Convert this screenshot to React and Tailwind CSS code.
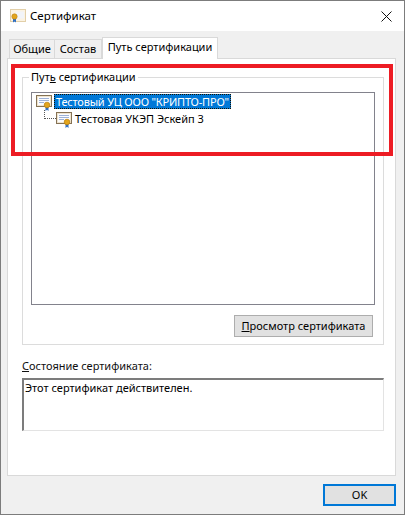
const FONT = "font-['Noto_Sans','Open_Sans',sans-serif]";

const CertIcon = ({ className }) => (
    <svg className={className} viewBox="0 0 17 16" width="17" height="16">
        <rect x="0.5" y="0.5" width="15" height="11" fill="#efe4cf" stroke="#857255" />
        <rect x="2" y="2" width="12" height="8" fill="#fbfcfe" />
        <path d="M3 3.5h10M3 5.5h10M3 7.5h5" stroke="#9db1d6" strokeWidth="1" />
        <path d="M9.5 11v5l1.5-1.2 1.5 1.2v-5z" fill="#2f6fc4" />
        <circle cx="11" cy="10" r="2.8" fill="#e3a51c" stroke="#b87c10" strokeWidth="0.7" />
    </svg>
);

const App = () => {
    return (
        <div className={`${FONT} relative flex h-[515px] w-[405px] flex-col border border-[#7c7c7c] bg-[#f0f0f0] text-[11px] text-black`}>
            {/* title bar */}
            <div className="flex h-[30px] items-center bg-white pl-[9px] pr-[12px]">
                <svg viewBox="0 0 16 14" width="16" height="14" className="mr-[4px]">
                    <rect x="0.5" y="0.5" width="15" height="12" fill="#fbf3e3" stroke="#e2cfa8" />
                    <rect x="6" y="2.5" width="8" height="7" fill="#f2f4f8" />
                    <path d="M3 9.5v4l1.5-1 1.5 1v-4z" fill="#2f6fc4" />
                    <circle cx="4.5" cy="7.5" r="2.7" fill="#e3a51c" stroke="#b57a10" strokeWidth="0.5" />
                </svg>
                <span className="text-[11.5px]">Сертификат</span>
                <svg viewBox="0 0 11 11" width="11" height="11" className="ml-auto">
                    <path d="M0.5 0.5l10 10M10.5 0.5l-10 10" stroke="#111" strokeWidth="1" fill="none" />
                </svg>
            </div>

            {/* tabs */}
            <div className="mt-[6px] flex h-[21px] items-end whitespace-nowrap pl-[8px]">
                <div className="flex h-[19px] w-[46px] items-center justify-center border border-b-0 border-[#d9d9d9] bg-[#f0f0f0]">Общие</div>
                <div className="flex h-[19px] w-[47px] items-center justify-center border border-b-0 border-l-0 border-[#d9d9d9] bg-[#f0f0f0]">Состав</div>
                <div className="z-10 -mb-px flex h-[22px] w-[116px] items-center justify-center border border-b-0 border-[#d9d9d9] bg-white pb-[2px]">Путь сертификации</div>
            </div>

            {/* tab page */}
            <div className="mx-[6px] flex h-[418px] w-[389px] flex-col border border-[#d9d9d9] bg-white px-[14px] pt-[11px]">
                <fieldset className="h-[275px] w-[362px] border border-[#dcdcdc] px-[8px]">
                    <legend className="-ml-[2px] px-[2px] leading-[14px]">
                        Пут<span className="underline">ь</span> сертификации
                    </legend>
                    <div className="relative mt-[8px] h-[213px] w-[344px] border border-[#82828c] pl-[4px] pt-[2px]">
                        <div className="flex h-[17px] items-start">
                            <CertIcon className="relative z-10" />
                            <span className="ml-[1px] -mt-px h-[15px] whitespace-nowrap border border-dotted border-[#1a1200] bg-[#0078d7] px-px leading-[13px] tracking-[-0.2px] text-white">
                                Тестовый УЦ ООО "КРИПТО-ПРО"
                            </span>
                        </div>
                        <div className="flex h-[17px] items-start pl-[20px]">
                            <CertIcon className="relative z-10" />
                            <span className="ml-[2px] -mt-px whitespace-nowrap leading-[15px]">Тестовая УКЭП Эскейп 3</span>
                        </div>
                        {/* tree connector */}
                        <div className="absolute left-[12px] top-[17px] h-[9px] w-[12px] border-b border-l border-dotted border-[#555]" />
                    </div>
                    <div className="mt-[10px] flex justify-end pr-[2px]">
                        <button className="h-[22px] w-[139px] border border-[#adadad] bg-[#e1e1e1]">
                            <span className="underline">П</span>росмотр сертификата
                        </button>
                    </div>
                </fieldset>

                <div className="mt-[13px] leading-[16px] text-[#111]">
                    <span className="underline">С</span>остояние сертификата:
                </div>
                <div className="mt-[4px] h-[53px] w-[362px] border-2 border-b border-r border-[#e3e3e3] border-l-[#7c7c7c] border-t-[#7c7c7c] pl-[1px] leading-[16px]">
                    Этот сертификат действителен.
                </div>
            </div>

            {/* footer */}
            <div className="flex flex-1 items-start justify-end pr-[8px] pt-[8px]">
                <button className="h-[22px] w-[73px] border-2 border-[#0078d7] bg-[#e1e1e1]">OK</button>
            </div>

            {/* red highlight drawn over the screenshot */}
            <div className="absolute left-[10px] top-[63px] h-[92px] w-[382px] border-4 border-[#ed1c24]" />
        </div>
    );
};

export default App;
